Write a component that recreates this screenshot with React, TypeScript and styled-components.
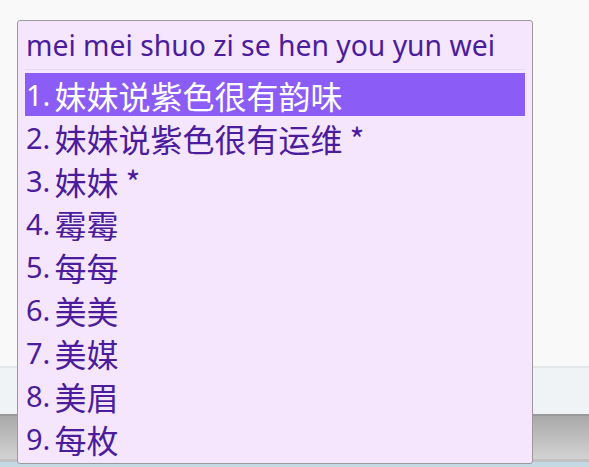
import React from "react";
import styled, { createGlobalStyle } from "styled-components";

const GlobalStyle = createGlobalStyle`
    html, body {
        margin: 0;
        padding: 0;
        width: 589px;
        height: 467px;
        overflow: hidden;
        background: #f9f9f9;
    }
    #root {
        height: 100%;
    }
`;

const candidates = [
    "妹妹说紫色很有韵味",
    "妹妹说紫色很有运维 *",
    "妹妹 *",
    "霉霉",
    "每每",
    "美美",
    "美媒",
    "美眉",
    "每枚",
];

const Desktop = styled.div`
    position: relative;
    height: 467px;
    display: flex;
    flex-direction: column;
`;

const Workspace = styled.div`
    flex: 1;
    background: #f9f9f9;
`;

const StatusBar = styled.div`
    height: 46px;
    border-top: 2px solid #e3e6e9;
    background: #eff3f6;
`;

const Taskbar = styled.div`
    height: 43px;
    border-top: 2px solid #999999;
    border-bottom: 3px solid #c2c2c2;
    background: linear-gradient(#a9a9a9, #d3d3d3);
`;

const TaskbarEdge = styled.div`
    height: 5px;
    background: #c4d9e3;
`;

const CandidateWindow = styled.div`
    position: absolute;
    left: 17px;
    top: 20px;
    width: 516px;
    height: 444px;
    border: 1px solid #9a9a9a;
    border-radius: 3px;
    background: #f5e6fe;
    padding: 0 7px 3px;
    box-sizing: border-box;
    display: flex;
    flex-direction: column;
    font-family: "Noto Sans", "Noto Sans CJK SC", sans-serif;
    color: #4b1c9c;
`;

const Composition = styled.div`
    height: 48px;
    display: flex;
    align-items: center;
    padding: 0 1px;
    font-size: 28.3px;
    border-bottom: 1px solid #e3dbe6;
    white-space: nowrap;
`;

const CandidateList = styled.div`
    margin-top: 3px;
    display: flex;
    flex-direction: column;
`;

const Candidate = styled.div<{ $selected?: boolean }>`
    height: 43px;
    display: flex;
    align-items: center;
    gap: 4px;
    padding-left: 1px;
    white-space: nowrap;
    background: ${({ $selected }) => ($selected ? "#8b5cf6" : "transparent")};
    color: ${({ $selected }) => ($selected ? "#ffffff" : "inherit")};
`;

const Index = styled.span`
    font-family: "Noto Sans", sans-serif;
    font-size: 29px;
`;

const Text = styled.span`
    font-family: "Noto Sans CJK SC", "Noto Sans", sans-serif;
    font-size: 32px;
    line-height: 1;
`;

export default function App() {
    return (
        <>
            <GlobalStyle />
            <Desktop>
                <Workspace />
                <StatusBar />
                <Taskbar />
                <TaskbarEdge />
                <CandidateWindow>
                    <Composition>mei mei shuo zi se hen you yun wei</Composition>
                    <CandidateList>
                        {candidates.map((c, i) => (
                            <Candidate key={i} $selected={i === 0}>
                                <Index>{i + 1}.</Index>
                                <Text>{c}</Text>
                            </Candidate>
                        ))}
                    </CandidateList>
                </CandidateWindow>
            </Desktop>
        </>
    );
}
